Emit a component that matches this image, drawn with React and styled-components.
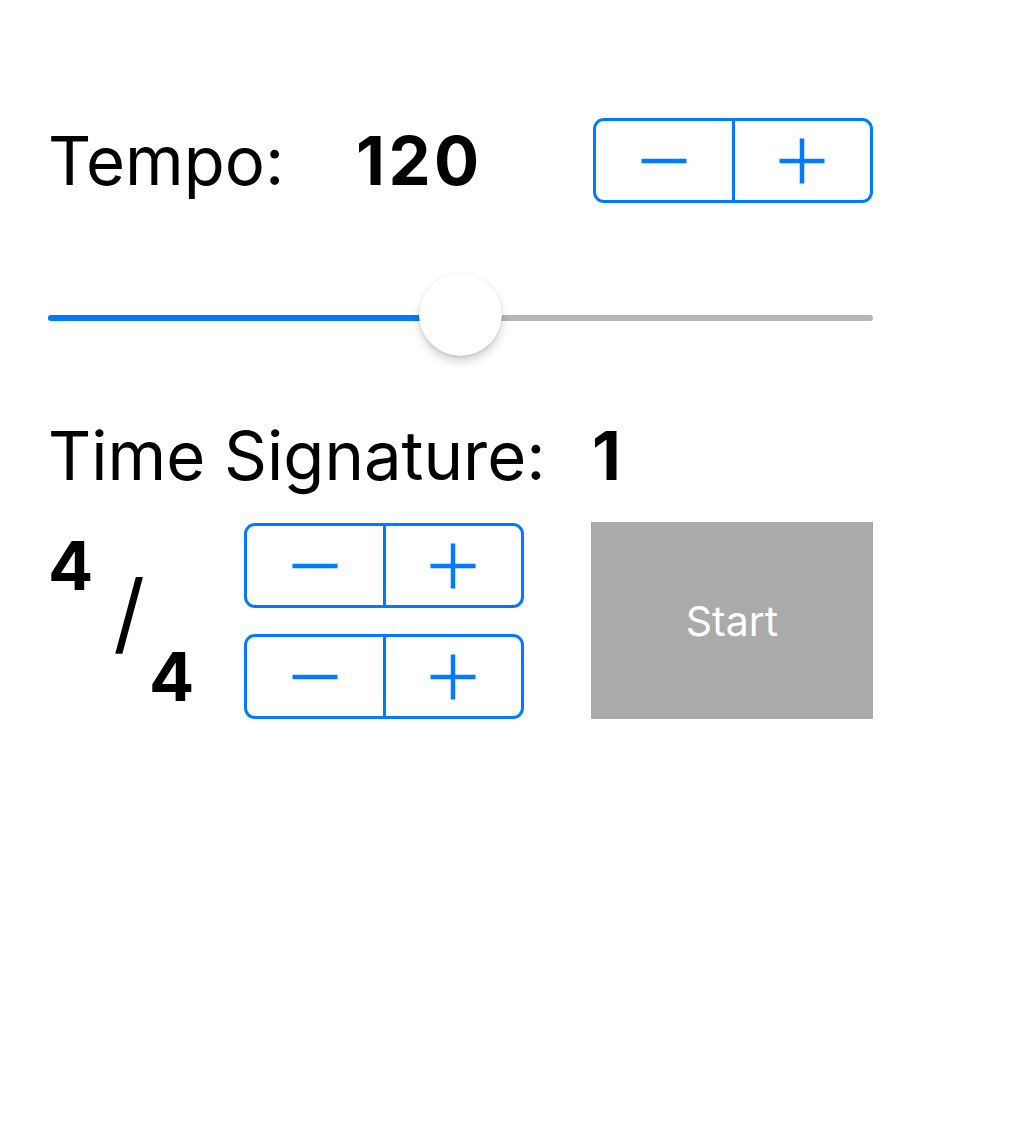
import React, { useState } from 'react';
import styled, { createGlobalStyle } from 'styled-components';

const GlobalStyle = createGlobalStyle`
  html, body {
    margin: 0;
    padding: 0;
    background: #ffffff;
  }
  body {
    font-family: Inter, "Noto Sans", "Liberation Sans", sans-serif;
    color: #000000;
  }
`;

const BLUE = '#007aff';

const Page = styled.div`
  width: 825px;
  padding: 118px 0 0 48px;
`;

const Row = styled.div`
  display: flex;
  align-items: center;
`;

const TempoRow = styled(Row)`
  height: 85px;
`;

const Label = styled.span`
  font-size: 67px;
  line-height: 67px;
  font-weight: 400;
  width: ${p => p.$width}px;
  flex-shrink: 0;
`;

const Value = styled.span`
  font-size: 67px;
  line-height: 67px;
  font-weight: 700;
  letter-spacing: 3.5px;
  flex: 1;
`;

const StepperBox = styled.div`
  display: flex;
  width: 280px;
  height: 85px;
  box-sizing: border-box;
  border: 3px solid ${BLUE};
  border-radius: 11px;
  overflow: hidden;
  flex-shrink: 0;
`;

const StepButton = styled.button`
  flex: 1;
  display: flex;
  align-items: center;
  justify-content: center;
  border: none;
  background: transparent;
  padding: 0;
  cursor: pointer;
  & + & {
    border-left: 3px solid ${BLUE};
  }
`;

const SliderRow = styled.div`
  position: relative;
  margin-top: 70px;
  height: 83px;
`;

const Track = styled.div`
  position: absolute;
  left: 0;
  right: 0;
  top: 42px;
  height: 5.5px;
  border-radius: 3px;
  background: #b6b6b6;
  overflow: hidden;
`;

const TrackFill = styled.div`
  height: 100%;
  background: ${BLUE};
`;

const Thumb = styled.div`
  position: absolute;
  top: 0;
  width: 83px;
  height: 83px;
  border-radius: 50%;
  background: #ffffff;
  box-shadow: 0 0 0 0.5px rgba(0, 0, 0, 0.05), 0 6px 10px rgba(0, 0, 0, 0.16),
    0 2px 2px rgba(0, 0, 0, 0.08);
`;

const SignatureRow = styled(Row)`
  margin-top: 66px;
`;

const Lower = styled.div`
  display: flex;
  margin-top: 33px;
  height: 197px;
`;

const Fraction = styled.div`
  display: flex;
  width: 196px;
  flex-shrink: 0;
`;

const Digit = styled.span`
  font-size: 67px;
  line-height: 67px;
  font-weight: 700;
  align-self: ${p => (p.$bottom ? 'flex-end' : 'flex-start')};
  margin: ${p => (p.$bottom ? '0 0 9px 0' : '10px 0 0 0')};
`;

const Slash = styled.span`
  font-size: 88px;
  line-height: 88px;
  font-weight: 400;
  align-self: center;
  margin: 0 4px 17px 20px;
`;

const StepperStack = styled.div`
  display: flex;
  flex-direction: column;
  justify-content: space-between;
  padding: 1px 0 0;
`;

const StartButton = styled.button`
  margin-left: 67px;
  width: 282px;
  height: 197px;
  border: none;
  background: #aaaaaa;
  color: #ffffff;
  font-family: Inter, "Noto Sans", "Liberation Sans", sans-serif;
  font-size: 41px;
  font-weight: 400;
  cursor: pointer;
`;

const MinusIcon = () => (
  <svg width="46" height="46" viewBox="0 0 46 46">
    <rect x="0.5" y="20.75" width="45" height="4.5" fill={BLUE} />
  </svg>
);

const PlusIcon = () => (
  <svg width="46" height="46" viewBox="0 0 46 46">
    <rect x="0.5" y="20.75" width="45" height="4.5" fill={BLUE} />
    <rect x="20.75" y="0.5" width="4.5" height="45" fill={BLUE} />
  </svg>
);

const Stepper = ({ onMinus, onPlus }) => (
  <StepperBox>
    <StepButton onClick={onMinus} aria-label="decrease">
      <MinusIcon />
    </StepButton>
    <StepButton onClick={onPlus} aria-label="increase">
      <PlusIcon />
    </StepButton>
  </StepperBox>
);

const MIN_TEMPO = 40;
const MAX_TEMPO = 200;

export default function App() {
  const [tempo, setTempo] = useState(120);
  const [beats, setBeats] = useState(4);
  const [unit, setUnit] = useState(4);

  const ratio = (tempo - MIN_TEMPO) / (MAX_TEMPO - MIN_TEMPO);

  return (
    <Page>
      <GlobalStyle />
      <TempoRow>
        <Label $width={308}>Tempo:</Label>
        <Value>{tempo}</Value>
        <Stepper
          onMinus={() => setTempo(t => Math.max(MIN_TEMPO, t - 1))}
          onPlus={() => setTempo(t => Math.min(MAX_TEMPO, t + 1))}
        />
      </TempoRow>

      <SliderRow>
        <Track>
          <TrackFill style={{ width: `${ratio * 100}%` }} />
        </Track>
        <Thumb style={{ left: `calc(${ratio} * (100% - 83px))` }} />
      </SliderRow>

      <SignatureRow>
        <Label $width={544}>Time Signature:</Label>
        <Value>1</Value>
      </SignatureRow>

      <Lower>
        <Fraction>
          <Digit>{beats}</Digit>
          <Slash>/</Slash>
          <Digit $bottom>{unit}</Digit>
        </Fraction>
        <StepperStack>
          <Stepper
            onMinus={() => setBeats(b => Math.max(1, b - 1))}
            onPlus={() => setBeats(b => b + 1)}
          />
          <Stepper
            onMinus={() => setUnit(u => Math.max(1, u / 2))}
            onPlus={() => setUnit(u => u * 2)}
          />
        </StepperStack>
        <StartButton>Start</StartButton>
      </Lower>
    </Page>
  );
}
